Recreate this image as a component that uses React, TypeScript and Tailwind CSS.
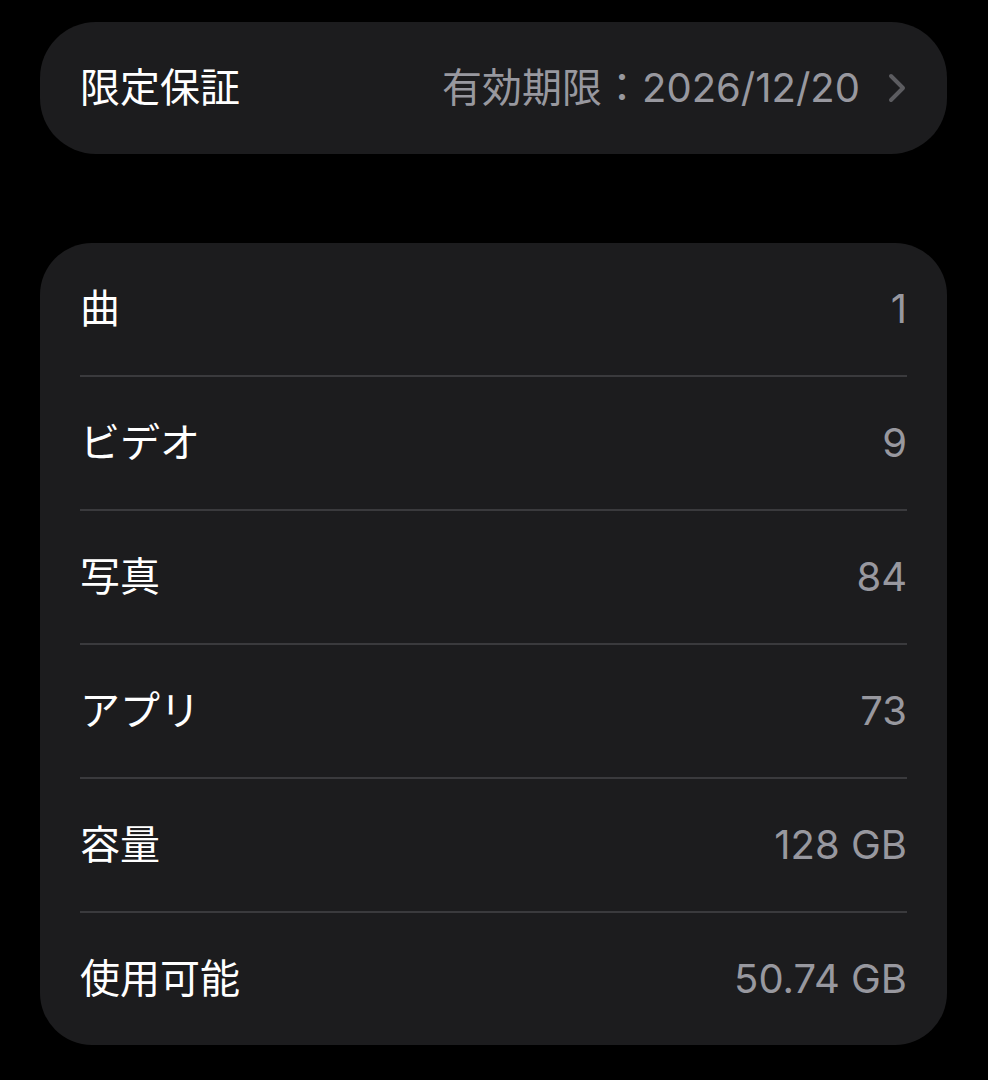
const rows = [
  { label: '曲', value: '1' },
  { label: 'ビデオ', value: '9' },
  { label: '写真', value: '84' },
  { label: 'アプリ', value: '73' },
  { label: '容量', value: '128 GB' },
  { label: '使用可能', value: '50.74 GB' },
]

function Chevron() {
  return (
    <svg width="20" height="32" viewBox="0 0 20 32" fill="none" className="shrink-0">
      <path d="M4 4 L16 16 L4 28" stroke="#5c5c60" strokeWidth="4" strokeLinecap="round" strokeLinejoin="round" />
    </svg>
  )
}

export default function App() {
  return (
    <div
      className="min-h-screen bg-black pl-10 pr-[41px] pt-[22px] pb-[35px] text-[40px] leading-none"
      style={{ fontFamily: 'Inter, "Noto Sans CJK JP", sans-serif' }}
    >
      {/* Warranty */}
      <div className="flex h-[132px] items-center justify-between rounded-[56px] bg-[#1c1c1e] pl-10 pr-10">
        <span className="text-white">限定保証</span>
        <div className="flex items-center gap-[27px]">
          <span className="text-[#98989f]">有効期限：2026/12/20</span>
          <Chevron />
        </div>
      </div>

      {/* Counts */}
      <div className="mt-[89px] rounded-[52px] bg-[#1c1c1e] px-10">
        {rows.map((r, i) => (
          <div key={r.label}>
            {i > 0 && <div className="h-[2px] bg-[#3a3a3d]" />}
            <div className="flex h-[132px] items-center justify-between">
              <span className="text-white">{r.label}</span>
              <span className="text-[#98989f]">{r.value}</span>
            </div>
          </div>
        ))}
      </div>
    </div>
  )
}
